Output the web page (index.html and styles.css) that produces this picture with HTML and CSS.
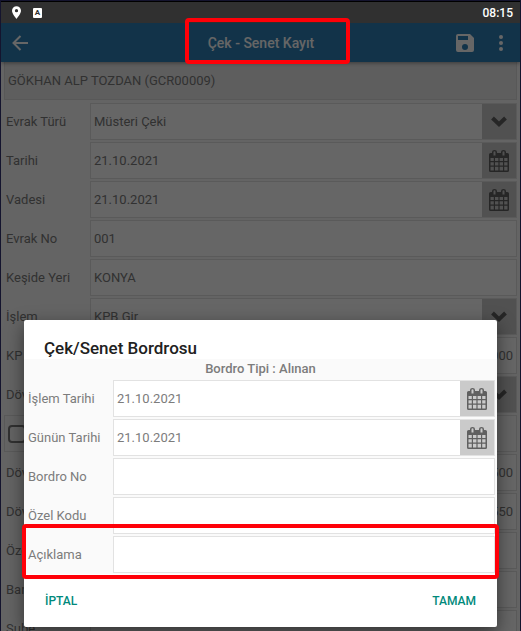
FILE: index.html
```html
<!DOCTYPE html>
<html lang="tr">
<head>
    <meta charset="UTF-8">
    <meta name="viewport" content="width=device-width, initial-scale=1.0">
    <title>Çek - Senet Kayıt</title>
    <link rel="stylesheet" href="styles.css">
</head>
<body>
    <svg class="symbols" aria-hidden="true">
        <symbol id="calendar" viewBox="0 0 20 22">
            <path fill="currentColor" fill-rule="evenodd" d="M1.500 3H3V2Q3 0 5.500 0T8 2V3h4V2q0-2 2.500-2T17 2v1h1.500Q20 3 20 4.500v16q0 1.500-1.500 1.500h-17Q0 22 0 20.500v-16Q0 3 1.500 3ZM4.500 2v3.500h2V2q0-.8-1-.8t-1 .8Zm9 0v3.500h2V2q0-.8-1-.8t-1 .8ZM1.500 8v3h3.300V8Zm4.500 0v3h3.400V8Zm4.600 0v3H14V8Zm4.600 0v3h3.300V8ZM1.500 12.200v3.300h3.300v-3.300Zm4.500 0v3.300h3.400v-3.300Zm4.600 0v3.300H14v-3.300Zm4.600 0v3.300h3.300v-3.300ZM1.500 16.700v3.800h3.300v-3.800Zm4.500 0v3.800h3.400v-3.800Zm4.600 0v3.800H14v-3.800Zm4.600 0v3.800h3.300v-3.800Z"/>
        </symbol>
        <symbol id="chevron" viewBox="0 0 16 11">
            <path fill="none" stroke="currentColor" stroke-width="4" d="M1.500 2L8 8.200L14.500 2"/>
        </symbol>
    </svg>

    <div class="screen">
        <div class="status-bar">
            <svg class="pin-icon" viewBox="0 0 10 14"><path fill="#fff" fill-rule="evenodd" d="M5 0a5 5 0 0 0-5 5c0 3.500 5 9 5 9s5-5.500 5-9a5 5 0 0 0-5-5Zm0 3.200a1.800 1.800 0 1 1 0 3.600 1.800 1.800 0 0 1 0-3.600Z"/></svg>
            <span class="keyboard-icon">A</span>
            <time class="clock">08:15</time>
        </div>

        <header class="toolbar">
            <button class="icon-button" aria-label="Geri">
                <svg width="16" height="16" viewBox="0 0 16 16"><path fill="none" stroke="currentColor" stroke-width="2" d="M8.500 1L1.500 8l7 7M1.500 8H16"/></svg>
            </button>
            <h1>Çek - Senet Kayıt</h1>
            <button class="icon-button" aria-label="Kaydet">
                <svg width="18" height="18" viewBox="0 0 18 18"><path fill="currentColor" fill-rule="evenodd" d="M2 0h12l4 4v12a2 2 0 0 1-2 2H2a2 2 0 0 1-2-2V2a2 2 0 0 1 2-2Zm0 2v4h10V2Zm7 8a3 3 0 1 0 0 6 3 3 0 0 0 0-6Z"/></svg>
            </button>
            <button class="icon-button menu-button" aria-label="Menü">
                <svg width="4" height="16" viewBox="0 0 4 16"><g fill="currentColor"><circle cx="2" cy="2" r="2"/><circle cx="2" cy="8" r="2"/><circle cx="2" cy="14" r="2"/></g></svg>
            </button>
        </header>

        <main class="form">
            <div class="account">GÖKHAN ALP TOZDAN (GCR00009)</div>
            <div class="row">
                <label for="docType">Evrak Türü</label>
                <div class="field">
                    <select id="docType"><option>Müsteri Çeki</option></select>
                    <span class="addon"><svg class="chevron"><use href="#chevron"/></svg></span>
                </div>
            </div>
            <div class="row">
                <label for="date">Tarihi</label>
                <div class="field">
                    <input type="text" id="date" value="21.10.2021">
                    <button class="addon" aria-label="Tarih seç"><svg class="calendar"><use href="#calendar"/></svg></button>
                </div>
            </div>
            <div class="row">
                <label for="dueDate">Vadesi</label>
                <div class="field">
                    <input type="text" id="dueDate" value="21.10.2021">
                    <button class="addon" aria-label="Vade seç"><svg class="calendar"><use href="#calendar"/></svg></button>
                </div>
            </div>
            <div class="row">
                <label for="docNo">Evrak No</label>
                <div class="field"><input type="text" id="docNo" value="001"></div>
            </div>
            <div class="row">
                <label for="place">Keşide Yeri</label>
                <div class="field"><input type="text" id="place" value="KONYA"></div>
            </div>
            <div class="row">
                <label for="operation">İşlem</label>
                <div class="field">
                    <select id="operation"><option>KPB Gir</option></select>
                    <span class="addon"><svg class="chevron"><use href="#chevron"/></svg></span>
                </div>
            </div>
            <div class="row">
                <label for="amount">KP</label>
                <div class="field"><input type="text" id="amount" class="number" value="000"></div>
            </div>
            <div class="row">
                <label for="currency">Döv</label>
                <div class="field">
                    <select id="currency"><option></option></select>
                    <span class="addon"><svg class="chevron"><use href="#chevron"/></svg></span>
                </div>
            </div>
            <div class="check-row"><input type="checkbox" aria-label="Döviz"></div>
            <div class="row">
                <label for="rate">Döv</label>
                <div class="field"><input type="text" id="rate" class="number" value="500"></div>
            </div>
            <div class="row">
                <label for="total">Döv</label>
                <div class="field"><input type="text" id="total" class="number" value="550"></div>
            </div>
            <div class="row">
                <label for="code">Öze</label>
                <div class="field"><input type="text" id="code"></div>
            </div>
            <div class="row">
                <label for="bank">Ban</label>
                <div class="field"><input type="text" id="bank"></div>
            </div>
            <div class="row">
                <label for="branch">Şube</label>
                <div class="field"><input type="text" id="branch"></div>
            </div>
        </main>

        <div class="overlay">
            <section class="dialog" role="dialog" aria-labelledby="dialogTitle">
                <h2 id="dialogTitle">Çek/Senet Bordrosu</h2>
                <div class="dialog-body">
                    <p class="type">Bordro Tipi : Alınan</p>
                    <div class="row">
                        <label for="opDate">İşlem Tarihi</label>
                        <div class="field">
                            <input type="text" id="opDate" value="21.10.2021">
                            <button class="addon" aria-label="İşlem tarihi seç"><svg class="calendar"><use href="#calendar"/></svg></button>
                        </div>
                    </div>
                    <div class="row">
                        <label for="today">Günün Tarihi</label>
                        <div class="field">
                            <input type="text" id="today" value="21.10.2021">
                            <button class="addon" aria-label="Günün tarihini seç"><svg class="calendar"><use href="#calendar"/></svg></button>
                        </div>
                    </div>
                    <div class="row">
                        <label for="slipNo">Bordro No</label>
                        <div class="field"><input type="text" id="slipNo"></div>
                    </div>
                    <div class="row">
                        <label for="slipCode">Özel Kodu</label>
                        <div class="field"><input type="text" id="slipCode"></div>
                    </div>
                    <div class="row marked">
                        <label for="note">Açıklama</label>
                        <div class="field"><input type="text" id="note"></div>
                    </div>
                </div>
                <div class="actions">
                    <button>İPTAL</button>
                    <button>TAMAM</button>
                </div>
            </section>
        </div>
        <div class="title-mark"></div>
    </div>
</body>
</html>
```

FILE: styles.css
```css
:root {
    --page-color: #fafafa;
    --line-color: #e2e2e2;
    --text-color: #7c7c7c;
    --primary-color: #2d80b7;
    --accent-color: #00897b;
    --mark-color: #ff0008;
}

* {
    margin: 0;
    padding: 0;
    box-sizing: border-box;
}

body {
    font-family: Roboto, "Noto Sans", sans-serif;
    font-size: 14px;
    color: var(--text-color);
}

button,
input,
select {
    font: inherit;
    color: inherit;
    border: none;
    background: none;
    border-radius: 0;
    appearance: none;
    outline: none;
}

button {
    cursor: pointer;
}

.symbols {
    display: none;
}

.screen {
    position: relative;
    height: 100vh;
    overflow: hidden;
    border: 1px solid #14142e;
    border-bottom: none;
    background: var(--page-color);
}

.status-bar {
    position: relative;
    z-index: 2;
    display: flex;
    align-items: center;
    gap: 12px;
    height: 22px;
    padding: 0 7px 0 11px;
    border-top: 1px solid #000;
    background: #303030;
    color: #fff;
}

.pin-icon {
    width: 9px;
    height: 13px;
}

.keyboard-icon {
    width: 9px;
    height: 10px;
    border-radius: 1px;
    background: #fff;
    color: #303030;
    font-size: 8px;
    font-weight: 700;
    line-height: 10px;
    text-align: center;
}

.clock {
    margin-left: auto;
    font-size: 12px;
    font-weight: 500;
}

.toolbar {
    position: relative;
    display: flex;
    align-items: center;
    height: 39px;
    padding: 0 13px 0 11px;
    background: var(--primary-color);
    box-shadow: 0 1px 4px rgba(0, 0, 0, 0.4);
    color: #fff;
}

.toolbar h1 {
    flex: 1;
    padding-left: 38px;
    font-size: 14px;
    font-weight: 500;
    text-align: center;
}

.icon-button {
    display: flex;
}

.menu-button {
    margin: 0 4px 0 25px;
}

.form {
    display: flex;
    flex-direction: column;
    gap: 2px;
    padding: 0 3px;
}

.account {
    height: 38px;
    margin-bottom: 1px;
    padding-left: 3px;
    border: 1px solid #dcdcdc;
    border-top: none;
    background: #ebebeb;
    font-size: 13px;
    line-height: 38px;
}

.row {
    display: grid;
    grid-template-columns: 86px 1fr;
    align-items: center;
    height: 37px;
}

.row label {
    padding-left: 2px;
    font-size: 13px;
}

.field {
    display: flex;
    height: 37px;
    border: 1px solid var(--line-color);
    background: #fff;
}

.field input,
.field select {
    flex: 1;
    min-width: 0;
    padding: 0 3px;
    font-size: 13px;
}

.field .number {
    text-align: right;
}

.addon {
    display: flex;
    align-items: center;
    justify-content: center;
    width: 34px;
    background: #cacaca;
    color: #606060;
}

.calendar {
    width: 20px;
    height: 22px;
}

.chevron {
    width: 16px;
    height: 11px;
}

.check-row {
    display: flex;
    align-items: center;
    height: 37px;
    padding-left: 3px;
    border: 1px solid var(--line-color);
}

.check-row input {
    width: 18px;
    height: 18px;
    border: 2px solid var(--text-color);
    border-radius: 4px;
}

.overlay {
    position: absolute;
    inset: 0;
    display: flex;
    align-items: flex-end;
    padding: 0 23px 4px;
    background: rgba(0, 0, 0, 0.6);
}

.dialog {
    flex: 1;
    border-radius: 2px;
    background: #fff;
    box-shadow: 0 6px 18px rgba(0, 0, 0, 0.5);
}

.dialog h2 {
    height: 39px;
    padding: 8px 20px 0;
    color: #212121;
    font-size: 17px;
    font-weight: 500;
    line-height: 40px;
}

.dialog-body {
    display: flex;
    flex-direction: column;
    gap: 2px;
    padding: 0 2px 1px;
    background: var(--page-color);
}

.type {
    height: 19px;
    font-size: 13px;
    font-weight: 500;
    line-height: 20px;
    text-align: center;
}

.dialog .row {
    grid-template-columns: 87px 1fr;
}

.marked {
    position: relative;
}

.marked::after {
    content: "";
    position: absolute;
    inset: -12px -4px -6px;
    border: 4px solid var(--mark-color);
    border-radius: 4px;
    pointer-events: none;
}

.title-mark {
    position: absolute;
    z-index: 3;
    top: 17px;
    left: calc(50% - 76px);
    width: 165px;
    height: 46px;
    border: 4px solid var(--mark-color);
    border-radius: 4px;
    pointer-events: none;
}

.actions {
    display: flex;
    justify-content: space-between;
    height: 53px;
    padding: 0 21px;
}

.actions button {
    color: var(--accent-color);
    font-size: 12px;
    font-weight: 500;
}
```
